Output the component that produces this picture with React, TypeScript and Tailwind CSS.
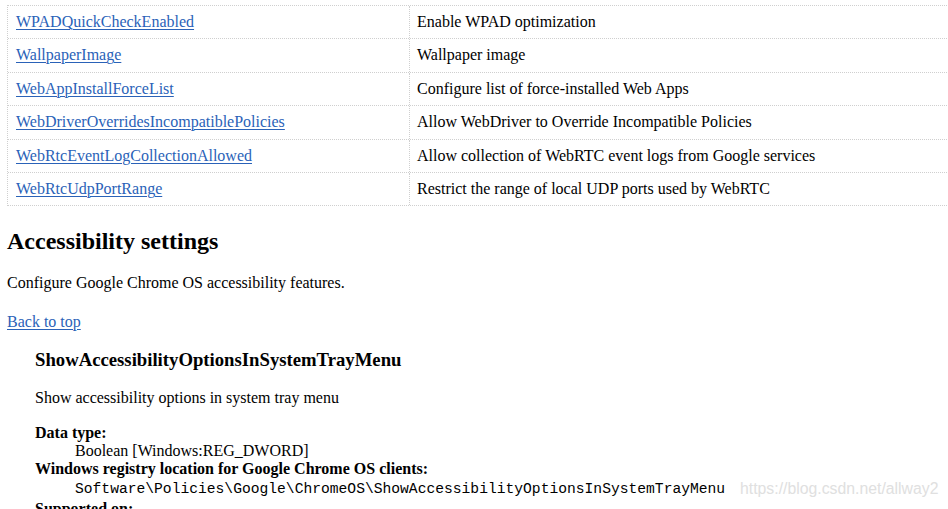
const rows = [
  { name: 'WPADQuickCheckEnabled', desc: 'Enable WPAD optimization' },
  { name: 'WallpaperImage', desc: 'Wallpaper image' },
  { name: 'WebAppInstallForceList', desc: 'Configure list of force-installed Web Apps' },
  { name: 'WebDriverOverridesIncompatiblePolicies', desc: 'Allow WebDriver to Override Incompatible Policies' },
  { name: 'WebRtcEventLogCollectionAllowed', desc: 'Allow collection of WebRTC event logs from Google services' },
  { name: 'WebRtcUdpPortRange', desc: 'Restrict the range of local UDP ports used by WebRTC' },
];

const linkCls = 'text-[#2a62b8] underline underline-offset-[2px] decoration-1';

export default function App() {
  return (
    <div className="relative h-[509px] w-[948px] overflow-hidden bg-white font-['Liberation_Serif',serif] text-[16px] leading-[18px] text-black">
      <div className="pl-[7px] pt-[5px]">
        {/* policy table */}
        <div className="w-[1000px] border-t border-l border-dotted border-[#cfcfcf]">
          {rows.map((r) => (
            <div key={r.name} className="grid grid-cols-[402px_1fr] border-b border-dotted border-[#cfcfcf] leading-[18.4px]">
              <div className="border-r border-dotted border-[#cfcfcf] px-[8px] py-[7px]">
                <a href="#" className={linkCls}>{r.name}</a>
              </div>
              <div className="px-[7px] py-[7px]">{r.desc}</div>
            </div>
          ))}
        </div>

        <h2 className="mt-[21px] text-[24px] font-bold leading-[28px]">Accessibility settings</h2>
        <p className="mt-[19px]">Configure Google Chrome OS accessibility features.</p>
        <p className="mt-[21px]">
          <a href="#" className={linkCls}>Back to top</a>
        </p>

        <div className="ml-[28px]">
          <h3 className="mt-[18px] text-[18.72px] font-bold leading-[22px]">ShowAccessibilityOptionsInSystemTrayMenu</h3>
          <p className="mt-[18px]">Show accessibility options in system tray menu</p>
          <dl className="mt-[17px]">
            <dt className="font-bold">Data type:</dt>
            <dd className="ml-[40px]">Boolean [Windows:REG_DWORD]</dd>
            <dt className="font-bold">Windows registry location for Google Chrome OS clients:</dt>
            <dd className="ml-[40px] font-['Liberation_Mono',monospace] text-[14.65px] leading-[22px]">
              Software\Policies\Google\ChromeOS\ShowAccessibilityOptionsInSystemTrayMenu
            </dd>
            <dt className="font-bold">Supported on:</dt>
          </dl>
        </div>
      </div>

      {/* watermark */}
      <div className="absolute left-[740px] top-[480px] font-['Liberation_Sans',sans-serif] text-[15.8px] text-[#e0e0e0]">
        https://blog.csdn.net/allway2
      </div>
    </div>
  );
}
